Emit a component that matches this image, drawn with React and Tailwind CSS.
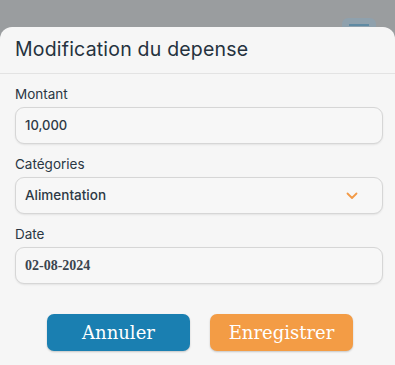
import React from "react";

function Field({ label, children }) {
  return (
    <div className="flex flex-col">
      <label className="text-[13.5px] text-[#2a3744] mb-[4px] leading-[18px] pl-[15px]">
        {label}
      </label>
      {children}
    </div>
  );
}

export default function App() {
  const box =
    "ml-[15px] mr-[12px] h-[37px] rounded-[9px] border border-[#d6d6d6] bg-[#f7f7f7] shadow-[0_1px_2px_rgba(0,0,0,0.08)] flex items-center px-[9px]";
  return (
    <div
      className="w-[395px] h-[365px] bg-[#9a9d9f] flex flex-col overflow-hidden"
      style={{ fontFamily: "Inter, 'Open Sans', sans-serif" }}
    >
      <div className="h-[27px] relative shrink-0">
        <div className="absolute right-[19px] top-[18px] w-[34px] h-[14px] rounded-[6px] bg-[#8fa1ad]">
          <div className="mx-auto mt-[6px] w-[20px] h-[2px] bg-[#5f8aa3]" />
        </div>
      </div>
      <div className="flex-1 bg-[#f6f6f6] rounded-t-[12px] relative">
        <div className="h-[47px] flex items-center pl-[15px] border-b border-[#e3e3e3]">
          <h1 className="text-[19.5px] text-[#25323e] tracking-[0.2px]">
            Modification du depense
          </h1>
        </div>
        <div className="flex flex-col gap-[11px] pt-[11px]">
          <Field label="Montant">
            <div className={box}>
              <span className="text-[13px] text-[#2d3945] font-medium">10,000</span>
            </div>
          </Field>
          <Field label="Catégories">
            <div className={box + " justify-between"}>
              <span className="text-[13.5px] text-[#2d3945] font-medium">Alimentation</span>
              <svg width="12" height="8" viewBox="0 0 12 8" className="mr-[15px]">
                <path d="M1.5 1.5 L6 6 L10.5 1.5" fill="none" stroke="#f29a47" strokeWidth="1.8" strokeLinecap="round" strokeLinejoin="round" />
              </svg>
            </div>
          </Field>
          <Field label="Date">
            <div className={box}>
              <span
                className="text-[14px] text-[#3a444e] font-semibold"
                style={{ fontFamily: "'Liberation Serif', serif" }}
              >
                02-08-2024
              </span>
            </div>
          </Field>
        </div>
        <div
          className="flex justify-center gap-[20px] pt-[30px] pl-[5px]"
          style={{ fontFamily: "'DejaVu Serif', 'Liberation Serif', serif" }}
        >
          <button className="w-[143px] h-[37px] rounded-[7px] bg-[#1a7fb1] text-white text-[18px] shadow-[0_1px_2px_rgba(0,0,0,0.2)]">
            Annuler
          </button>
          <button className="w-[143px] h-[37px] rounded-[7px] bg-[#f39c45] text-white text-[18px] shadow-[0_1px_2px_rgba(0,0,0,0.2)]">
            Enregistrer
          </button>
        </div>
      </div>
    </div>
  );
}
